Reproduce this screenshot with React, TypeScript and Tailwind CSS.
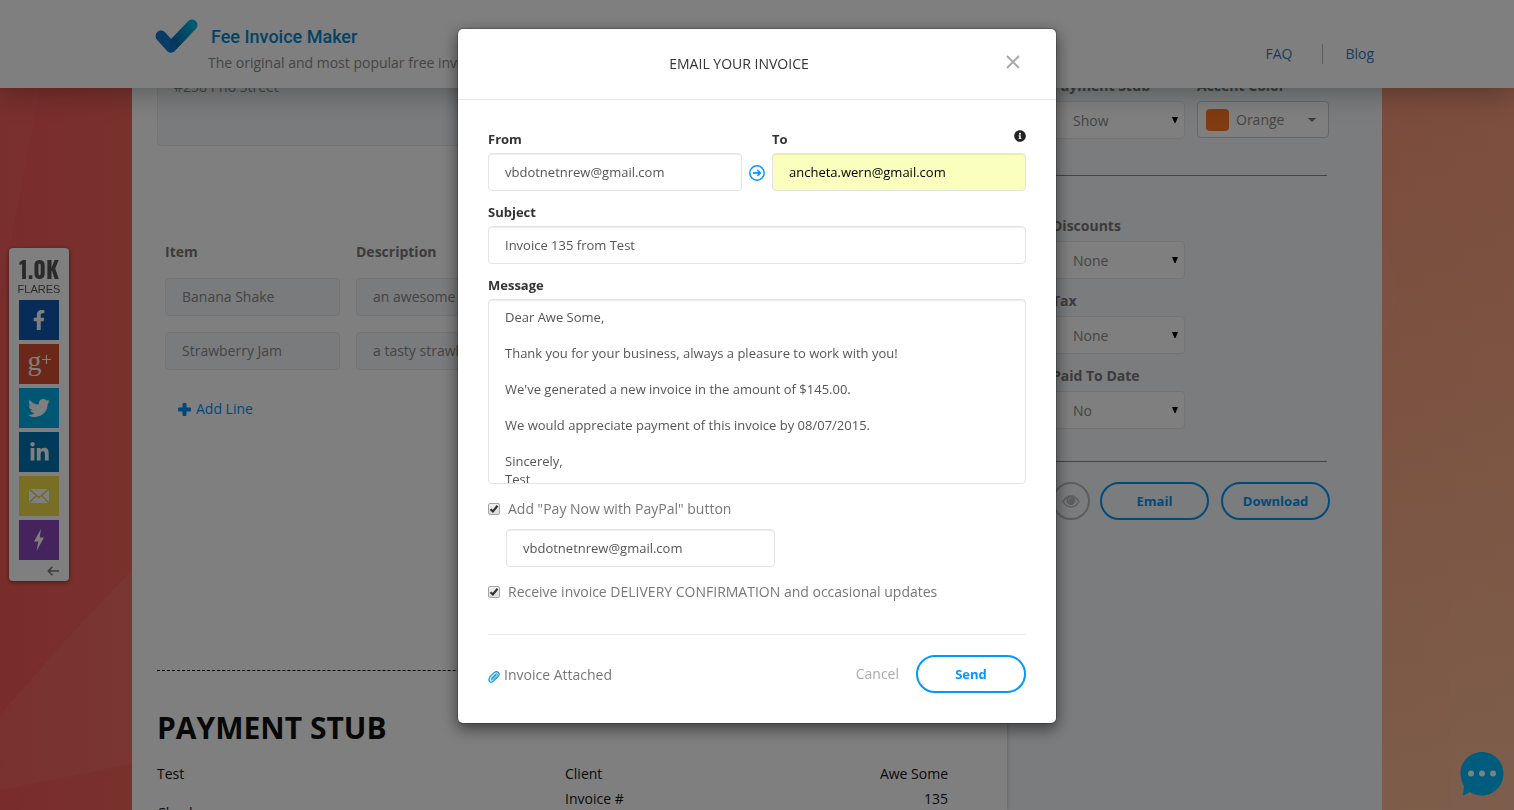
import { type ReactNode } from "react";
import { FaFacebookF, FaInfoCircle, FaLinkedinIn, FaTwitter } from "react-icons/fa";

const message = `Dear Awe Some,

Thank you for your business, always a pleasure to work with you!

We've generated a new invoice in the amount of $145.00.

We would appreciate payment of this invoice by 08/07/2015.

Sincerely,
Test`;

const fieldClass =
  "block w-full h-[38px] rounded border border-[#e4e4e4] px-4 text-[13px] text-[#555] shadow-[inset_0_1px_1px_rgba(0,0,0,0.075)] outline-none";
const lineInputClass =
  "block w-full h-[38px] rounded border border-[#e8e8ea] bg-[#f5f7fa] px-4 pb-0.5 text-sm text-[#888] outline-none";

function Backdrop() {
  return (
    <svg className="absolute inset-0 h-full w-full" viewBox="0 0 1514 810" preserveAspectRatio="none" aria-hidden="true">
      <defs>
        <linearGradient id="sky" x1="0" y1="0" x2="1" y2="0">
          <stop offset="0" stopColor="#f25a57" />
          <stop offset="0.09" stopColor="#f46459" />
          <stop offset="0.91" stopColor="#f69476" />
          <stop offset="1" stopColor="#f89878" />
        </linearGradient>
        <linearGradient id="glow" x1="0" y1="0" x2="0" y2="1">
          <stop offset="0" stopColor="#ffd8a8" stopOpacity="0" />
          <stop offset="1" stopColor="#ffe0b4" stopOpacity="0.5" />
        </linearGradient>
      </defs>
      <rect width="1514" height="810" fill="url(#sky)" />
      <rect x="1300" width="214" height="810" fill="url(#glow)" />
      <polygon points="0,715 66,640 132,570 132,764 0,790" fill="#fff" fillOpacity="0.06" />
      <polygon points="0,88 40,88 0,300" fill="#fff" fillOpacity="0.03" />
      <polygon points="1382,240 1400,290 1382,340" fill="#fff" fillOpacity="0.03" />
      <polygon points="1450,560 1514,600 1514,810 1450,810" fill="#fff" fillOpacity="0.02" />
    </svg>
  );
}

function Header() {
  return (
    <header className="relative z-10 h-[88px] bg-white shadow-[0_2px_30px_rgba(0,15,8,0.35)]">
      <div className="mx-auto flex h-full max-w-[1250px] justify-between pl-[23px] pr-2">
        <div className="pt-[18px]">
          <div className="flex h-9 items-center gap-[13px]">
            <svg width="43" height="36" viewBox="0 0 43 36" aria-hidden="true">
              <defs>
                <linearGradient id="tickLong" x1="1" y1="0" x2="0" y2="1">
                  <stop offset="0" stopColor="#00b4e0" />
                  <stop offset="0.5" stopColor="#0a86c8" />
                  <stop offset="1" stopColor="#0a5aa0" />
                </linearGradient>
                <linearGradient id="tickShort" x1="0" y1="0" x2="1" y2="1">
                  <stop offset="0" stopColor="#1076cc" />
                  <stop offset="1" stopColor="#0f7cd4" />
                </linearGradient>
              </defs>
              <path d="M16 29 L37 7" stroke="url(#tickLong)" strokeWidth="11" strokeLinecap="round" />
              <path d="M6 18 L16 29" stroke="url(#tickShort)" strokeWidth="11" strokeLinecap="round" />
              <path d="M16 21 L24 27 L20 32 L14 33 Z" fill="#0b68b4" fillOpacity="0.5" />
            </svg>
            <a href="#" className="pt-0.5 font-['Roboto',sans-serif] text-lg font-medium leading-6 text-[#0584cf]">
              Fee Invoice Maker
            </a>
          </div>
          <p className="pl-[53px] text-sm leading-[18px] text-[#888]">
            The original and most popular free invoice maker
          </p>
        </div>
        <nav className="mt-5 flex h-5 items-center self-center text-sm text-[#337ab7]">
          <a href="#faq" className="pr-[30px]">FAQ</a>
          <a href="#blog" className="border-l border-[#bbb] pl-[22px]">Blog</a>
        </nav>
      </div>
    </header>
  );
}

function InvoicePaper() {
  const rows = [
    { item: "Banana Shake", description: "an awesome shake" },
    { item: "Strawberry Jam", description: "a tasty strawberry jam" },
  ];
  const details = [
    ["Client", "Awe Some"],
    ["Invoice #", "135"],
  ];
  return (
    <article className="relative min-w-0 flex-1 bg-white px-[25px] shadow-[0_0_4px_rgba(0,0,0,0.25)]">
      <textarea
        aria-label="Address"
        defaultValue="#258 Pho Street"
        className="-mt-5 block h-[78px] w-[380px] resize-none rounded border border-[#e8e8ea] bg-[#f5f7fa] px-4 py-2 text-sm leading-5 text-[#888] outline-none"
      />
      <table className="ml-2 mt-24 table-fixed border-collapse text-left text-sm">
        <thead>
          <tr className="text-[#777]">
            <th className="w-[191px] pb-4 leading-5">Item</th>
            <th className="w-[300px] pb-4 leading-5">Description</th>
          </tr>
        </thead>
        <tbody>
          {rows.map((row) => (
            <tr key={row.item}>
              <td className="pb-4 pr-4"><input aria-label="Item" defaultValue={row.item} className={lineInputClass} /></td>
              <td className="pb-4 pr-4"><input aria-label="Description" defaultValue={row.description} className={lineInputClass} /></td>
            </tr>
          ))}
        </tbody>
      </table>
      <button type="button" className="ml-[21px] mt-[13px] flex h-5 items-center gap-[5px] text-sm text-[#0090f5]">
        <svg width="13" height="13" viewBox="0 0 13 13" aria-hidden="true">
          <path d="M5.500 0H7.500Q8.500 0 8.500 1V4.500H12Q13 4.500 13 5.500V7.500Q13 8.500 12 8.500H8.500V12Q8.500 13 7.500 13H5.500Q4.500 13 4.500 12V8.500H1Q0 8.500 0 7.500V5.500Q0 4.500 1 4.500H4.500V1Q4.500 0 5.500 0Z" fill="currentColor" />
        </svg>
        Add Line
      </button>
      <hr className="mt-[251px] border-dashed border-black" />
      <h2 className="mt-[37px] text-[30px] font-bold leading-10 text-[#111]">PAYMENT STUB</h2>
      <div className="mt-[13px] flex text-sm leading-[25px] text-[#111]">
        <div className="flex w-[408px] flex-col gap-[14px]">
          <p>Test</p>
          <p>Check</p>
        </div>
        <table className="w-[383px] self-start">
          <tbody>
            {details.map(([name, value]) => (
              <tr key={name}>
                <th className="p-0 text-left font-normal">{name}</th>
                <td className="p-0 text-right">{value}</td>
              </tr>
            ))}
          </tbody>
        </table>
      </div>
    </article>
  );
}

function SelectField({ id, label, value }: { id: string; label: string; value: string }) {
  return (
    <div className="w-[133px]">
      <label htmlFor={id} className="block whitespace-nowrap text-sm font-bold leading-5 text-[#777]">{label}</label>
      <div className="relative mt-[5px]">
        <select
          id={id}
          defaultValue={value}
          className="block h-[38px] w-full appearance-none rounded border border-[#e8e8ea] bg-white pl-5 pr-4 pt-0.5 text-sm text-[#888] outline-none"
        >
          <option>{value}</option>
        </select>
        <svg className="pointer-events-none absolute right-[7px] top-4" width="6" height="6" viewBox="0 0 6 6" aria-hidden="true">
          <path d="M0 0H6L3.500 6H2.500Z" fill="#000" />
        </svg>
      </div>
    </div>
  );
}

function Sidebar() {
  const pill = "h-[38px] w-[109px] rounded-full border-2 border-[#0096f5] pt-0.5 text-[13px] font-bold text-[#0096f5]";
  return (
    <aside className="w-[375px] shrink-0 bg-[#f6f8fb] pl-[45px] pr-[52px]">
      <div className="-mt-3 flex gap-3">
        <SelectField id="stub" label="Payment Stub" value="Show" />
        <div className="w-[132px]">
          <span id="accent" className="block text-sm font-bold leading-5 text-[#777]">Accent Color</span>
          <button
            type="button"
            aria-labelledby="accent"
            className="mt-[5px] flex h-[37px] w-full items-center rounded border border-[#ccc] bg-white pl-2 pr-3 text-sm text-[#888]"
          >
            <span className="mr-[7px] h-[22px] w-[23px] rounded bg-[#ff7722]" />
            Orange
            <svg className="ml-auto" width="8" height="4" viewBox="0 0 8 4" aria-hidden="true">
              <path d="M0 0H8L4 4Z" fill="#777" />
            </svg>
          </button>
        </div>
      </div>
      <hr className="mr-[3px] mt-9 border-[#888]" />
      <div className="mt-10 flex flex-col gap-3">
        <SelectField id="discounts" label="Discounts" value="None" />
        <SelectField id="tax" label="Tax" value="None" />
        <SelectField id="paid" label="Paid To Date" value="No" />
      </div>
      <hr className="mr-[3px] mt-8 border-[#888]" />
      <div className="mt-5 flex">
        <button type="button" aria-label="Preview" className="mr-[10px] flex size-[38px] items-center justify-center rounded-full border-2 border-[#bbb]">
          <svg width="18" height="13" viewBox="0 0 18 13" fill="none" aria-hidden="true">
            <path d="M1 6.500C3 3 6 1 9 1s6 2 8 5.500c-2 3.500-5 5.500-8 5.500s-6-2-8-5.500Z" stroke="#bbb" strokeWidth="1.400" />
            <circle cx="9" cy="5.500" r="4.500" fill="#bbb" />
            <path d="M6.500 5.500C6.500 4 7.500 3 9 3" stroke="#f6f8fb" strokeWidth="1" />
          </svg>
        </button>
        <button type="button" className={`${pill} mr-3`}>Email</button>
        <button type="button" className={pill}>Download</button>
      </div>
    </aside>
  );
}

function Share({ label, className, children }: { label: string; className: string; children: ReactNode }) {
  return (
    <a href={`#${label}`} aria-label={label} className={`flex size-10 items-center justify-center text-white ${className}`}>
      {children}
    </a>
  );
}

function Flares() {
  return (
    <aside className="fixed left-[9px] top-[248px] flex w-[60px] flex-col items-center rounded bg-white pt-2 shadow-[0_1px_4px_rgba(0,0,0,0.5)]">
      <strong className="font-['Oswald','Roboto_Condensed','Open_Sans_Condensed','Liberation_Sans',sans-serif] text-[23px] font-bold leading-[26px] text-[#555]">1.0K</strong>
      <span className="font-['Liberation_Sans',sans-serif] text-[11px] leading-[14px] text-[#555]">FLARES</span>
      <div className="mt-1 flex flex-col gap-1">
        <Share label="facebook" className="bg-[#0e58b0]"><FaFacebookF size={20} /></Share>
        <Share label="google-plus" className="bg-[#d64e30]">
          <span className="pb-1.5 font-['Liberation_Serif',serif] text-[28px] leading-7">g</span>
          <svg className="mb-2.5" width="9" height="9" viewBox="0 0 9 9" stroke="#fff" aria-hidden="true">
            <path d="M0 4.500H9M4.500 0V9" strokeWidth="1.200" />
          </svg>
        </Share>
        <Share label="twitter" className="bg-[#00aee8]"><FaTwitter size={22} /></Share>
        <Share label="linkedin" className="bg-[#0074b4]"><FaLinkedinIn size={21} /></Share>
        <Share label="mail" className="bg-[#f0dc48]">
          <svg width="20" height="14" viewBox="0 0 20 14" aria-hidden="true">
            <rect width="20" height="14" rx="1" fill="#fff" />
            <path d="M0.500 0.500L10 8.500L19.500 0.500M0.500 13.500L7.500 6.500M19.500 13.500L12.500 6.500" fill="none" stroke="#e0ca40" strokeWidth="1.200" />
          </svg>
        </Share>
        <Share label="flare" className="bg-[#8a48bc]">
          <svg width="12" height="24" viewBox="0 0 12 24" aria-hidden="true">
            <path d="M8 1L1 13.500H5.300L3.500 23L11 9.500H6.700Z" fill="#fff" />
          </svg>
        </Share>
      </div>
      <button type="button" aria-label="Collapse" className="mr-[10px] flex h-[21px] items-center self-end">
        <svg width="12" height="10" viewBox="0 0 12 10" fill="none" stroke="#777" strokeWidth="1.600" aria-hidden="true">
          <path d="M12 5H1.500M5.500 0.800L1.300 5L5.500 9.200" />
        </svg>
      </button>
    </aside>
  );
}

function CheckRow({ id, children }: { id: string; children: ReactNode }) {
  return (
    <div className="flex h-5 items-center gap-2">
      <span className="relative block size-3">
        <input
          id={id}
          type="checkbox"
          defaultChecked
          className="peer block size-3 appearance-none rounded-[2px] border border-[#a5a5a5] bg-gradient-to-b from-[#f0f0f0] to-[#dcdcdc]"
        />
        <svg className="pointer-events-none absolute inset-0 hidden peer-checked:block" width="12" height="12" viewBox="0 0 12 12" fill="none" aria-hidden="true">
          <path d="M2.500 6.200L4.900 8.500L9.500 2.800" stroke="#333" strokeWidth="2.200" />
        </svg>
      </span>
      <label htmlFor={id} className="text-sm text-[#777]">{children}</label>
    </div>
  );
}

function EmailDialog() {
  const label = "block text-[13px] font-bold leading-[18px] text-[#333]";
  return (
    <section
      role="dialog"
      aria-labelledby="dialog-title"
      className="mt-7 w-[600px] max-w-full rounded-md border border-black/20 bg-white bg-clip-padding shadow-[0_5px_15px_rgba(0,0,0,0.5)]"
    >
      <header className="relative flex h-[71px] items-center justify-center border-b border-[#e5e5e5]">
        <h1 id="dialog-title" className="pr-9 text-sm text-[#333]">EMAIL YOUR INVOICE</h1>
        <button type="button" aria-label="Close" className="absolute right-9 top-[26px]">
          <svg width="14" height="14" viewBox="0 0 14 14" stroke="#aaa" strokeWidth="2" aria-hidden="true">
            <path d="M1 1L13 13M13 1L1 13" />
          </svg>
        </button>
      </header>
      <form className="p-[30px]" onSubmit={(event) => event.preventDefault()}>
        <div className="flex items-end">
          <div className="flex-1">
            <label htmlFor="from" className={label}>From</label>
            <input id="from" defaultValue="vbdotnetnrew@gmail.com" className={`${fieldClass} mt-[5px]`} />
          </div>
          <div className="flex h-[38px] w-[30px] items-center justify-center pt-0.5">
            <svg width="16" height="16" viewBox="0 0 16 16" fill="none" stroke="#0099ff" aria-hidden="true">
              <circle cx="8" cy="8" r="7.200" strokeWidth="1.500" />
              <path d="M4 8H11" strokeWidth="1.800" />
              <path d="M8.300 5L11.300 8L8.300 11" strokeWidth="1.700" />
            </svg>
          </div>
          <div className="flex-1">
            <div className="flex items-start justify-between">
              <label htmlFor="to" className={label}>To</label>
              <FaInfoCircle size={12} color="#222" />
            </div>
            <input id="to" defaultValue="ancheta.wern@gmail.com" className="mt-[5px] block h-[38px] w-full rounded border border-[#e4e4e4] bg-[#faffbd] px-4 text-[13px] text-black shadow-[inset_0_1px_1px_rgba(0,0,0,0.075)] outline-none" />
          </div>
        </div>
        <label htmlFor="subject" className={`${label} mt-3`}>Subject</label>
        <input id="subject" defaultValue="Invoice 135 from Test" className={`${fieldClass} mt-[5px]`} />
        <label htmlFor="message" className={`${label} mt-3`}>Message</label>
        <textarea
          id="message"
          defaultValue={message}
          className="mt-[5px] block h-[185px] w-full resize-none overflow-hidden rounded border border-[#e4e4e4] px-4 py-2 text-[13px] leading-[18px] text-[#555] shadow-[inset_0_1px_1px_rgba(0,0,0,0.075)] outline-none"
        />
        <div className="mt-[15px]">
          <CheckRow id="paypal">Add "Pay Now with PayPal" button</CheckRow>
        </div>
        <div className="ml-[18px] mt-[10px] w-[269px]">
          <input aria-label="PayPal email" defaultValue="vbdotnetnrew@gmail.com" className={fieldClass} />
        </div>
        <div className="mt-[15px]">
          <CheckRow id="updates">Receive invoice DELIVERY CONFIRMATION and occasional updates</CheckRow>
        </div>
        <hr className="mt-8 border-[#eee]" />
        <footer className="mt-5 flex items-center">
          <span className="flex items-center gap-1 pt-0.5 text-sm text-[#777]">
            <svg className="mt-1" width="12" height="12" viewBox="0 0 12 12" fill="none" aria-hidden="true">
              <path d="M1.800 5.800L6 1.700C7.400 0.400 9.300 0.500 10.300 1.500C11.400 2.600 11.400 4.200 10.200 5.500L5.400 10.200C4.300 11.300 2.800 11.500 1.700 10.500C0.600 9.400 0.700 7.700 1.800 6.500Z" fill="#bfeaff" stroke="#1597dc" strokeWidth="1.100" />
              <path d="M3.200 8.800L8 4M4.300 9.300L9.200 4.300C10 3.400 9 2.200 8 3L3.200 7.600" stroke="#1597dc" strokeWidth="0.900" />
            </svg>
            Invoice Attached
          </span>
          <button type="button" className="ml-auto mr-[17px] text-sm text-[#aaa]">Cancel</button>
          <button type="submit" className="h-[38px] w-[110px] rounded-full border-2 border-[#0099ff] pt-0.5 text-[13px] font-bold text-[#0099ff]">Send</button>
        </footer>
      </form>
    </section>
  );
}

export default function App() {
  return (
    <div className="relative h-screen overflow-hidden font-['Open_Sans',sans-serif]">
      <Backdrop />
      <div className="relative flex h-full flex-col">
        <Header />
        <main className="mx-auto flex min-h-0 w-full max-w-[1250px] flex-1 overflow-hidden">
          <InvoicePaper />
          <Sidebar />
        </main>
      </div>
      <Flares />
      <button type="button" aria-label="Chat" className="fixed bottom-[14px] right-[10px]">
        <svg width="44" height="45" viewBox="0 0 44 45" aria-hidden="true">
          <path d="M22 1C34 1 43.500 10.500 43.500 22.500S34 44.500 22 44.500C17.500 44.500 13.500 43 10 41L3 44.500L4 35C2 31.500 0.500 27 0.500 22.500C0.500 10.500 10 1 22 1Z" fill="#00b8f8" />
          <circle cx="11" cy="22.500" r="3" fill="#fff" />
          <circle cx="22" cy="22.500" r="3" fill="#fff" />
          <circle cx="33" cy="22.500" r="3" fill="#fff" />
        </svg>
      </button>
      <div className="fixed inset-0 z-20 flex items-start justify-center bg-black/50">
        <EmailDialog />
      </div>
    </div>
  );
}
